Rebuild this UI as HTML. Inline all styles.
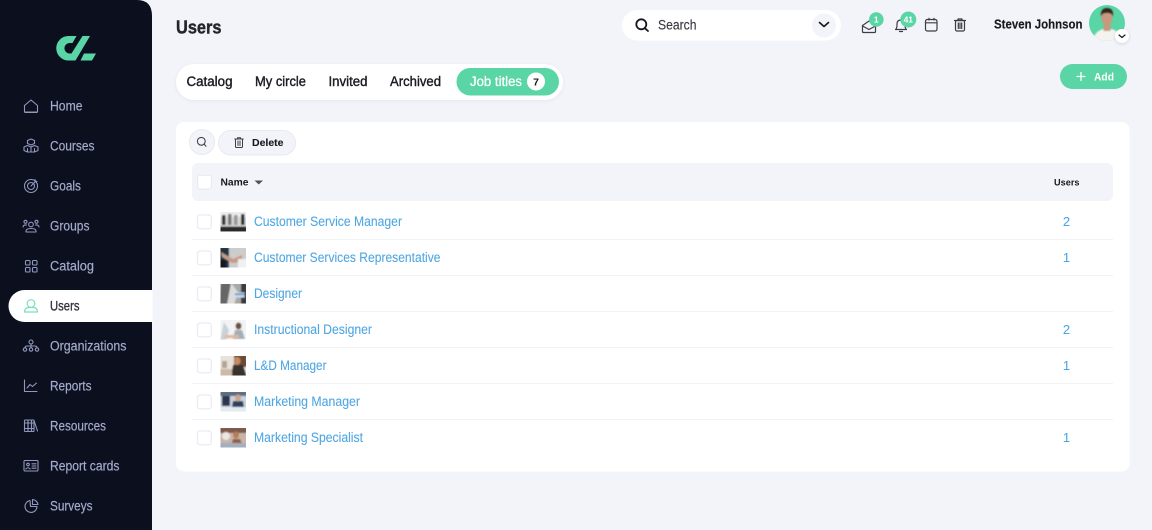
<!DOCTYPE html>
<html lang="en"><head><meta charset="utf-8"><title>Users</title>
<style>
html,body{margin:0;padding:0;background:#f3f4f9;width:1152px;height:530px;overflow:hidden}
svg{display:block}
text{font-family:"Liberation Sans",sans-serif}
.n{font-size:13.5px;fill:#a4a9cd;stroke:#a4a9cd;stroke-width:.2}
.t{font-size:13.5px;fill:#1c1d24;stroke:#1c1d24;stroke-width:.4}
.l{font-size:13.5px;fill:#4ea6e2;stroke:#4ea6e2;stroke-width:.08}
.b{font-weight:700;fill:#17181f}
.i{fill:none;stroke:#9298bd;stroke-width:1.1;stroke-linecap:round;stroke-linejoin:round}
.d{fill:none;stroke:#3b3c44;stroke-width:1.2;stroke-linecap:round;stroke-linejoin:round}
.c{fill:#fff;stroke:#e9eaf3;stroke-width:1.2}
</style></head><body>
<svg width="1152" height="530" viewBox="0 0 1152 530" xmlns="http://www.w3.org/2000/svg">
<defs><filter id="s" x="-5%" y="-30%" width="110%" height="160%"><feDropShadow dx="0" dy="1" stdDeviation="2" flood-color="#c9cce0" flood-opacity=".35"/></filter>
<filter id="bl" x="-5%" y="-5%" width="110%" height="110%"><feGaussianBlur stdDeviation=".7"/></filter>
<filter id="sh" x="-50%" y="-50%" width="200%" height="200%"><feDropShadow dx="0" dy="1" stdDeviation="1.500" flood-color="#9a9db5" flood-opacity=".4"/></filter>
<clipPath id="av"><circle cx="1107" cy="23" r="18"/></clipPath>
<clipPath id="th"><rect x="220.500" y="212" width="25.500" height="19.500"/><rect x="220.500" y="248" width="25.500" height="19.500"/><rect x="220.500" y="284" width="25.500" height="19.500"/><rect x="220.500" y="320" width="25.500" height="19.500"/><rect x="220.500" y="356" width="25.500" height="19.500"/><rect x="220.500" y="392" width="25.500" height="19.500"/><rect x="220.500" y="428" width="25.500" height="19.500"/></clipPath></defs>
<rect width="1152" height="530" fill="#f3f4f9"/>
<path d="M0 0H137Q152 0 152 16V530H0Z" fill="#0b0f1e"/>
<path d="M76.500 36H68.500A12.200 12.200 0 0 0 68.500 60.500H75.500L90 36H82.500L71.500 53.500H69A5.300 5.300 0 0 1 69 43H72.500Z" fill="#5ad5a5"/>
<path d="M84 53.500H96L92 60.500H80.500Z" fill="#5ad5a5"/>
<path d="M8.500 306a16 16 0 0 1 16-16H152.500V322H24.500a16 16 0 0 1-16-16Z" fill="#fff"/>

<path class="i" d="M24.500 105.500L31 100L37.500 105.500V112H24.500ZM25 112.500H37"/>
<g class="i"><path d="M27.500 143.500V140.500L31 139L34.500 140.500V143.500L31 145Z"/><path d="M24 147L27.500 145.500L31 147L34.500 145.500L38 147V150.500L34.500 152H27.500L24 150.500Z"/><path d="M31 147V152M27.500 148.500V152M34.500 148.500V152"/></g>
<g class="i"><circle cx="31" cy="186" r="6.500"/><circle cx="31" cy="186" r="3.500"/><path d="M31 186L36 181M35 179.500V181.500H37"/></g>
<g class="i"><circle cx="31" cy="224.500" r="2.300"/><circle cx="25.500" cy="221.800" r="1.500"/><circle cx="36.500" cy="221.800" r="1.500"/><path d="M26 232V231Q26 228.500 31 228.500Q36 228.500 36 231V232H26ZM23 227Q23.500 224.500 26.500 225M39 227Q38.500 224.500 35.500 225"/></g>
<g class="i"><rect x="25.500" y="260.500" width="4.500" height="4.500" rx="1"/><rect x="32.500" y="260.500" width="4.500" height="4.500" rx="1"/><rect x="25.500" y="267.500" width="4.500" height="4.500" rx="1"/><rect x="32.500" y="267.500" width="4.500" height="4.500" rx="1"/></g>
<g fill="none" stroke="#7be0bb" stroke-width="1.200" stroke-linecap="round" stroke-linejoin="round"><circle cx="31" cy="303.500" r="3.800"/><path d="M24.500 311.500Q25 307.500 29 307.500H33Q37 307.500 37.500 311.500V312H24.500Z"/></g>
<g class="i"><circle cx="31" cy="342" r="2"/><circle cx="25" cy="349.500" r="1.700"/><circle cx="31" cy="349.500" r="1.700"/><circle cx="37" cy="349.500" r="1.700"/><path d="M31 344V348M25 348Q25 346 27 346H35Q37 346 37 348"/></g>
<g class="i"><path d="M24.500 380V391.500H37"/><path d="M27 388L30 384.500L32.500 386.500L36.500 383"/></g>
<g class="i"><rect x="24.500" y="420" width="3.500" height="11.500" rx=".6"/><rect x="28" y="420" width="3.500" height="11.500" rx=".6"/><rect x="31.500" y="420" width="2.500" height="11.500" rx=".6"/><path d="M34 420.500L37.500 431M24.500 423H34M24.500 428.500H34"/></g>
<g class="i"><rect x="24" y="460.500" width="14" height="10.500" rx="1"/><circle cx="28" cy="464.500" r="1.300"/><path d="M25.800 469Q28 466.500 30.200 469M32 463.800H36M32 466H36M32 468.200H36"/></g>
<g class="i"><path d="M30 500.500A6 6 0 1 0 37 506.500H30.500Z"/><path d="M32.500 499.500A6 6 0 0 1 38 504.500H32.500Z"/></g>

<text class="n" x="50" y="110.500" textLength="32.500" lengthAdjust="spacingAndGlyphs">Home</text>
<text class="n" x="50" y="150.500" textLength="44.500" lengthAdjust="spacingAndGlyphs">Courses</text>
<text class="n" x="50" y="190.500" textLength="31" lengthAdjust="spacingAndGlyphs">Goals</text>
<text class="n" x="50" y="230.500" textLength="39.500" lengthAdjust="spacingAndGlyphs">Groups</text>
<text class="n" x="50" y="270.500" textLength="44" lengthAdjust="spacingAndGlyphs">Catalog</text>
<text class="n" x="50" y="310.500" textLength="29.500" lengthAdjust="spacingAndGlyphs" style="fill:#30323c;stroke:#30323c;stroke-width:.3">Users</text>
<text class="n" x="50" y="350.500" textLength="76.500" lengthAdjust="spacingAndGlyphs">Organizations</text>
<text class="n" x="50" y="390.500" textLength="41.500" lengthAdjust="spacingAndGlyphs">Reports</text>
<text class="n" x="50" y="430.500" textLength="56" lengthAdjust="spacingAndGlyphs">Resources</text>
<text class="n" x="50" y="470.500" textLength="69.500" lengthAdjust="spacingAndGlyphs">Report cards</text>
<text class="n" x="50" y="510.500" textLength="42.500" lengthAdjust="spacingAndGlyphs">Surveys</text>

<text x="176" y="33.500" font-size="18.500" class="b" textLength="45.500" lengthAdjust="spacingAndGlyphs" style="fill:#23242c;stroke:#23242c;stroke-width:.4">Users</text>

<rect x="622" y="10" width="219" height="30.500" rx="15.250" fill="#fff"/>
<g fill="none" stroke="#17181f" stroke-width="1.800" stroke-linecap="round"><circle cx="641.300" cy="24.300" r="5"/><path d="M645 28.300L648 31"/></g>
<text x="658" y="29.500" font-size="13.500" fill="#3a3b44" stroke="#3a3b44" stroke-width=".15" textLength="38.500" lengthAdjust="spacingAndGlyphs">Search</text>
<circle cx="824" cy="25.500" r="12" fill="#f3f4f9"/>
<path d="M819.500 22.500L824 26.500L828.500 22.500" fill="none" stroke="#17181f" stroke-width="1.600" stroke-linecap="round" stroke-linejoin="round"/>

<g class="d"><path d="M862.500 25.500L869 21L875.500 25.500V31.500Q875.500 32.500 874.500 32.500H863.500Q862.500 32.500 862.500 31.500Z"/><path d="M862.500 26L869 29.500L875.500 26"/></g>
<circle cx="876.300" cy="19.500" r="7.300" fill="#5ad5a5"/>
<text x="876.300" y="22.500" font-size="8.500" font-weight="700" fill="#fff" text-anchor="middle">1</text>
<g class="d"><path d="M895.500 29.500Q897 28.500 897 25V24Q897 20 901 20Q905 20 905 24V25Q905 28.500 906.500 29.500Z"/><path d="M899.500 31.500H902.500"/></g>
<circle cx="908.300" cy="19.500" r="8" fill="#5ad5a5"/>
<text x="908.300" y="22.500" font-size="8.500" font-weight="700" fill="#fff" text-anchor="middle">41</text>
<g class="d"><rect x="925.500" y="19.500" width="11.500" height="11.500" rx="1.800"/><path d="M925.500 22.800H937M929 18.300V20M934 18.300V20"/></g>
<g class="d"><path d="M954.500 20.500H965.500M958 20.500V19H962V20.500"/><rect x="955.500" y="20.500" width="9" height="10.500" rx="1.500"/><path d="M958.300 23V28.500M960 23V28.500M961.700 23V28.500"/></g>

<text x="994" y="28.300" font-size="13" class="b" textLength="88.500" lengthAdjust="spacingAndGlyphs" stroke="#17181f" stroke-width=".15">Steven Johnson</text>

<circle cx="1107" cy="23" r="18" fill="#5ad5a5"/>
<g clip-path="url(#av)"><g filter="url(#bl)"><path d="M1092 44Q1093 32 1103 29L1107 31L1112 29Q1121 32 1123 44Z" fill="#f4f3f0"/><rect x="1103.500" y="24" width="7" height="7" fill="#c9977d"/><ellipse cx="1107" cy="18" rx="5.500" ry="7" fill="#c9987e"/><path d="M1101 17Q1100 8 1107 8Q1114 8 1113 17Q1112 12.500 1107 13Q1102 12.500 1101 17Z" fill="#33251f"/></g></g>
<circle cx="1122" cy="36" r="7" fill="#fff" filter="url(#sh)"/>
<path d="M1119 35L1122 37.500L1125 35" fill="none" stroke="#17181f" stroke-width="1.200" stroke-linecap="round" stroke-linejoin="round"/>

<rect x="176" y="64" width="387" height="36" rx="18" fill="#fff" filter="url(#s)"/>
<rect x="456.500" y="68" width="102.500" height="27.500" rx="13.750" fill="#5ad5a5"/>
<text class="t" x="186.500" y="86" textLength="46" lengthAdjust="spacingAndGlyphs">Catalog</text>
<text class="t" x="255" y="86" textLength="51" lengthAdjust="spacingAndGlyphs">My circle</text>
<text class="t" x="328.500" y="86" textLength="39" lengthAdjust="spacingAndGlyphs">Invited</text>
<text class="t" x="390" y="86" textLength="51" lengthAdjust="spacingAndGlyphs">Archived</text>
<text x="470" y="86" font-size="13.500" fill="#fff" stroke="#fff" stroke-width=".25" textLength="52" lengthAdjust="spacingAndGlyphs">Job titles</text>
<circle cx="536" cy="81.500" r="9" fill="#fff"/>
<text x="536" y="85.300" font-size="10.500" font-weight="700" fill="#17181f" text-anchor="middle">7</text>

<rect x="1060" y="64" width="67" height="25" rx="12.500" fill="#5ad5a5"/>
<path d="M1077 76.500H1085M1081 72.500V80.500" stroke="#fff" stroke-width="1.300" stroke-linecap="round"/>
<text x="1094" y="80.300" font-size="11" font-weight="700" fill="#fff" textLength="20" lengthAdjust="spacingAndGlyphs">Add</text>

<rect x="176" y="122" width="953.500" height="349.500" rx="8" fill="#fff"/>
<circle cx="202" cy="142" r="12.500" fill="#f3f4f9" stroke="#e8e9f2"/>
<g fill="none" stroke="#43444d" stroke-width="1.100" stroke-linecap="round"><circle cx="201.300" cy="141.300" r="3.900"/><path d="M204.200 144.300L206 146.200"/></g>
<rect x="218.500" y="130.500" width="77" height="24.500" rx="12.250" fill="#f3f4f9" stroke="#e8e9f2"/>
<g class="d" style="stroke-width:1"><rect x="235.500" y="139" width="7" height="8.500" rx="1"/><path d="M234.700 139H243.300M237.500 139V137.700H240.500V139M238 141V145.500M240 141V145.500"/></g>
<text x="252" y="145.800" font-size="10.500" class="b" textLength="31.500" lengthAdjust="spacingAndGlyphs" stroke="#17181f" stroke-width=".1">Delete</text>

<rect x="192" y="163" width="921" height="38" rx="6" fill="#f3f4f9"/>
<rect class="c" x="197.600" y="175.300" width="13.800" height="13.800" rx="2.500"/>
<text x="220.500" y="185.500" font-size="10" class="b" textLength="28" lengthAdjust="spacingAndGlyphs">Name</text>
<path d="M254.500 180.500H263L258.750 184.500Z" fill="#50515a"/>
<text x="1054" y="185.500" font-size="9.500" class="b" textLength="25.500" lengthAdjust="spacingAndGlyphs">Users</text>

<g stroke="#f2f3f8" stroke-width="1"><path d="M192 239.500H1113M192 275.500H1113M192 311.500H1113M192 347.500H1113M192 383.500H1113M192 419.500H1113"/></g>

<rect class="c" x="197.500" y="215" width="13.800" height="13.800" rx="2.500"/>
<rect class="c" x="197.500" y="251" width="13.800" height="13.800" rx="2.500"/>
<rect class="c" x="197.500" y="287" width="13.800" height="13.800" rx="2.500"/>
<rect class="c" x="197.500" y="323" width="13.800" height="13.800" rx="2.500"/>
<rect class="c" x="197.500" y="359" width="13.800" height="13.800" rx="2.500"/>
<rect class="c" x="197.500" y="395" width="13.800" height="13.800" rx="2.500"/>
<rect class="c" x="197.500" y="431" width="13.800" height="13.800" rx="2.500"/>

<!-- thumbnails -->
<g clip-path="url(#th)"><g filter="url(#bl)">
<rect x="219" y="211" width="28" height="22" fill="#d6d6d6"/><rect x="219" y="211" width="28" height="6" fill="#ececec"/><rect x="219" y="226.500" width="28" height="6" fill="#2a2a2a"/>
<rect x="222" y="215" width="3.500" height="10" fill="#333"/><rect x="228" y="214" width="3.500" height="11" fill="#777"/><rect x="234" y="215" width="3.500" height="10" fill="#999"/><rect x="241" y="214" width="3.500" height="11" fill="#2c2c2c"/>
<rect x="219" y="247" width="28" height="22" fill="#243244"/><rect x="229" y="247" width="18" height="22" fill="#ccc"/><path d="M221 252L233 259L242 255V262L232 263L222 257Z" fill="#c59b85"/><rect x="238" y="259" width="9" height="10" fill="#f0f0f0"/><rect x="219" y="260" width="7" height="9" fill="#12161f"/>
<rect x="219" y="283" width="28" height="22" fill="#a8a8a8"/><path d="M221 283H231L227 305H219Z" fill="#666"/><path d="M231 283L238 292L234 305H227Z" fill="#dcdcdc"/><rect x="241" y="283" width="6" height="22" fill="#3a3a3a"/><rect x="235" y="292.500" width="9.500" height="5" fill="#c8dbee"/><rect x="235" y="293.500" width="9.500" height="1.500" fill="#4f87c0"/>
<rect x="219" y="319" width="28" height="22" fill="#f1f3f4"/><path d="M224 322L229 330L226 341H220Z" fill="#c8d2d8"/><ellipse cx="238.500" cy="326" rx="3" ry="3.500" fill="#6f4f40"/><path d="M233 339L235 330H242L245 339Z" fill="#a3adb9"/><rect x="225" y="335" width="14" height="3" fill="#e2b79d"/>
<rect x="219" y="355" width="28" height="22" fill="#e8e2dc"/><rect x="234" y="355" width="13" height="12" fill="#6b4c3b"/><ellipse cx="237" cy="361" rx="3.500" ry="4" fill="#c58a63"/><path d="M231 377L233 365H243L247 377Z" fill="#38312f"/><rect x="219" y="369" width="13" height="8" fill="#cdb9a7"/><rect x="222" y="361" width="5" height="7" fill="#b3a594"/>
<rect x="219" y="391" width="28" height="22" fill="#cbd2db"/><rect x="219" y="391" width="28" height="5" fill="#616d80"/><path d="M222 396H230V406H222Z" fill="#2a3650"/><path d="M231 413L233 401H243L245 413Z" fill="#2c3f60"/><ellipse cx="238" cy="398" rx="3" ry="3.500" fill="#c9a68f"/><rect x="219" y="407" width="28" height="6" fill="#e4eaf1"/>
<rect x="219" y="427" width="28" height="22" fill="#c9b5a8"/><rect x="219" y="427" width="28" height="6" fill="#7c5a4c"/><ellipse cx="226" cy="436" rx="4" ry="4" fill="#ece7e2"/><ellipse cx="236" cy="435" rx="3" ry="3.500" fill="#b57c58"/><path d="M231 446L233 439H240L243 446Z" fill="#8f5f42"/><rect x="219" y="443" width="28" height="6" fill="#a4afbd"/>
</g></g>

<text class="l" x="254" y="225.800" textLength="148" lengthAdjust="spacingAndGlyphs">Customer Service Manager</text>
<text class="l" x="254" y="261.800" textLength="186.500" lengthAdjust="spacingAndGlyphs">Customer Services Representative</text>
<text class="l" x="254" y="297.800" textLength="48" lengthAdjust="spacingAndGlyphs">Designer</text>
<text class="l" x="254" y="333.800" textLength="118" lengthAdjust="spacingAndGlyphs">Instructional Designer</text>
<text class="l" x="254" y="369.800" textLength="72.500" lengthAdjust="spacingAndGlyphs">L&amp;D Manager</text>
<text class="l" x="254" y="405.800" textLength="106" lengthAdjust="spacingAndGlyphs">Marketing Manager</text>
<text class="l" x="254" y="441.800" textLength="109" lengthAdjust="spacingAndGlyphs">Marketing Specialist</text>

<text class="l" x="1066.500" y="225.800" text-anchor="middle" style="font-size:13px">2</text>
<text class="l" x="1066.500" y="261.800" text-anchor="middle" style="font-size:13px">1</text>
<text class="l" x="1066.500" y="333.800" text-anchor="middle" style="font-size:13px">2</text>
<text class="l" x="1066.500" y="369.800" text-anchor="middle" style="font-size:13px">1</text>
<text class="l" x="1066.500" y="441.800" text-anchor="middle" style="font-size:13px">1</text>
</svg>
</body></html>
